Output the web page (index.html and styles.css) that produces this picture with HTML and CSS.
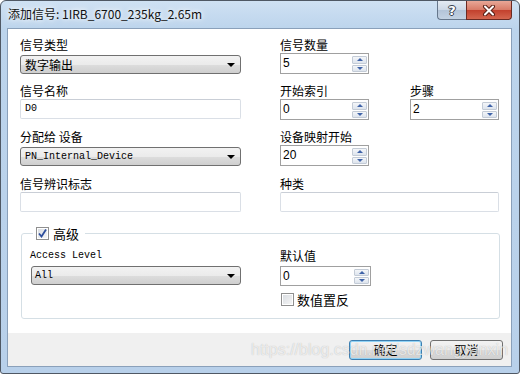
FILE: index.html
```html
<!DOCTYPE html>
<html lang="zh-CN">
  <head>
    <meta charset="UTF-8" />
    <title>添加信号</title>
    <link rel="stylesheet" href="styles.css">
  </head>
  <body>
    <div class="window">
      <div class="titlebar">
        <span class="title">添加信号: 1IRB_6700_235kg_2.65m</span>
        <div class="caption-buttons">
          <span class="cap-btn help">?</span>
          <span class="cap-btn close">
            <svg width="14" height="11" viewBox="0 0 14 11">
              <path d="M3 1.5 L11 9.5 M11 1.5 L3 9.5" stroke="#5a2016" stroke-width="4" stroke-linecap="round" />
              <path d="M3 1.5 L11 9.5 M11 1.5 L3 9.5" stroke="#fff" stroke-width="2" stroke-linecap="round" />
            </svg>
          </span>
        </div>
      </div>

      <div class="client">
        <div class="form">
          <div class="fields">
            <div class="field">
              <label>信号类型</label>
              <div class="combo"><span>数字输出</span><i class="arrow"></i></div>
            </div>
            <div class="field">
              <label>信号数量</label>
              <div class="spin">
                <span class="value">5</span>
                <span class="spin-btns"><b class="up"></b><b class="down"></b></span>
              </div>
            </div>

            <div class="field">
              <label>信号名称</label>
              <div class="textbox mono">D0</div>
            </div>
            <div class="field pair">
              <div class="field">
                <label>开始索引</label>
                <div class="spin">
                  <span class="value">0</span>
                  <span class="spin-btns"><b class="up"></b><b class="down"></b></span>
                </div>
              </div>
              <div class="field">
                <label>步骤</label>
                <div class="spin">
                  <span class="value">2</span>
                  <span class="spin-btns"><b class="up"></b><b class="down"></b></span>
                </div>
              </div>
            </div>

            <div class="field">
              <label>分配给 设备</label>
              <div class="combo mono"><span>PN_Internal_Device</span><i class="arrow"></i></div>
            </div>
            <div class="field">
              <label>设备映射开始</label>
              <div class="spin">
                <span class="value">20</span>
                <span class="spin-btns"><b class="up"></b><b class="down"></b></span>
              </div>
            </div>

            <div class="field">
              <label>信号辨识标志</label>
              <div class="textbox"></div>
            </div>
            <div class="field">
              <label>种类</label>
              <div class="textbox"></div>
            </div>
          </div>

          <fieldset class="group">
            <legend>
              <span class="check checked">
                <svg width="9" height="9" viewBox="0 0 9 9">
                  <path d="M1 4.5 L3.5 7.5 L8 0.5" fill="none" stroke="#2d4e9c" stroke-width="1.8" />
                </svg>
              </span>
              <span>高级</span>
            </legend>
            <div class="field">
              <label class="mono">Access Level</label>
              <div class="combo mono indent"><span>All</span><i class="arrow"></i></div>
            </div>
            <div class="field">
              <label>默认值</label>
              <div class="spin wide">
                <span class="value">0</span>
                <span class="spin-btns"><b class="up"></b><b class="down"></b></span>
              </div>
              <div class="check-row">
                <span class="check"></span>
                <span>数值置反</span>
              </div>
            </div>
          </fieldset>
        </div>

        <div class="footer">
          <button class="btn default">确定</button>
          <button class="btn">取消</button>
        </div>
      </div>

      <span class="watermark">https://blog.csdn.net/sdzwangyanxin</span>
    </div>
  </body>
</html>
```

FILE: styles.css
```css
* {
  box-sizing: border-box;
}
body {
  margin: 0;
  font-family: "Noto Sans CJK SC", "Liberation Sans", sans-serif;
  font-size: 12px;
  color: #000;
}
.mono {
  font-family: "Liberation Mono", "Noto Sans CJK SC", monospace;
  font-size: 10px;
}

/* window frame */
.window {
  position: relative;
  width: 520px;
  height: 374px;
  border: 1px solid #4f5864;
  border-radius: 6px 6px 3px 3px;
  background: linear-gradient(#cfe1f3, #bcd4ec 28px, #b8d0ea);
  padding: 0 7px 6px 6px;
  display: flex;
  flex-direction: column;
  overflow: hidden;
}
.titlebar {
  height: 27px;
  display: flex;
  justify-content: space-between;
  align-items: flex-start;
}
.title {
  padding: 5px 0 0 1px;
  line-height: 16px;
  font-size: 12px;
  color: #111;
  text-shadow: 0 0 8px #fff, 0 0 4px #fff;
}
.caption-buttons {
  display: flex;
}
.cap-btn {
  height: 19px;
  display: flex;
  align-items: center;
  justify-content: center;
}
.help {
  width: 29px;
  border: 1px solid #66778c;
  border-top: none;
  border-right: none;
  border-radius: 0 0 0 4px;
  background: linear-gradient(#e4ebf3, #ccd8e6 50%, #b3c4d8 51%, #c3d2e3);
  font-family: "DejaVu Sans", sans-serif;
  font-weight: bold;
  font-size: 13px;
  color: #fff;
  text-shadow: 0 0 1px #3b4452, 1px 0 0 #3b4452, -1px 0 0 #3b4452, 0 1px 0 #3b4452, 0 -1px 0 #3b4452;
}
.close {
  width: 46px;
  border: 1px solid #6b2a22;
  border-top: none;
  border-radius: 0 0 4px 0;
  background: linear-gradient(#e8a797, #d77a66 50%, #c2402d 51%, #d4664f);
}

/* client area */
.client {
  flex: 1;
  border: 1px solid #8aa0ba;
  background: #fff;
  display: flex;
  flex-direction: column;
}
.form {
  flex: 1;
  padding: 8px 12px 0 12px;
}
.fields {
  display: grid;
  grid-template-columns: 221px 219px;
  grid-template-rows: 46px 46px 47px auto;
  column-gap: 39px;
}
.field {
  display: flex;
  flex-direction: column;
}
.field label {
  display: block;
  height: 16px;
  line-height: 16px;
}
.pair {
  flex-direction: row;
  justify-content: space-between;
}

/* controls */
.combo {
  margin-top: 2px;
  height: 19px;
  border: 1px solid #707070;
  border-radius: 3px;
  background: linear-gradient(#f2f2f2, #ebebeb 50%, #dddddd 51%, #cfcfcf);
  display: flex;
  align-items: center;
  justify-content: space-between;
  padding: 0 5px 0 4px;
  line-height: 16px;
}
.combo.indent {
  margin-left: 1px;
  padding-left: 3px;
}
.arrow {
  width: 0;
  height: 0;
  border-left: 4px solid transparent;
  border-right: 4px solid transparent;
  border-top: 4px solid #000;
}
.textbox {
  height: 20px;
  border: 1px solid #dadfe6;
  border-top-color: #c9ced6;
  border-radius: 2px;
  padding: 0 4px;
  line-height: 18px;
}
.spin {
  width: 89px;
  height: 21px;
  border: 1px solid #a0a0a0;
  display: flex;
  justify-content: space-between;
  padding: 1px;
  font-family: "Liberation Sans", sans-serif;
  font-size: 12px;
}
.spin.wide {
  width: 91px;
  height: 20px;
  margin-top: 2px;
}
.spin .value {
  padding-left: 1px;
  line-height: 17px;
}
.spin-btns {
  width: 15px;
  display: flex;
  flex-direction: column;
  gap: 1px;
  padding-top: 1px;
}
.spin-btns b {
  flex: 1;
  border: 1px solid #c3cbd6;
  border-radius: 1px;
  background: linear-gradient(#f4f6f9, #dde4ed);
  display: flex;
  align-items: center;
  justify-content: center;
}
.spin-btns b::after {
  content: "";
  border-left: 3px solid transparent;
  border-right: 3px solid transparent;
}
.spin-btns .up::after {
  border-bottom: 3px solid #3f63a8;
}
.spin-btns .down::after {
  border-top: 3px solid #3f63a8;
}

/* group box */
.group {
  margin: 14px 0 0 1px;
  width: 479px;
  min-width: 0;
  border: 1px solid #d5dfe5;
  border-radius: 3px;
  padding: 8px 8px 12px 8px;
  display: grid;
  grid-template-columns: 211px 91px;
  column-gap: 39px;
}
.group legend {
  margin-left: 3px;
  padding: 0 6px 0 3px;
  height: 14px;
  display: flex;
  align-items: center;
  gap: 4px;
  font-size: 13px;
}
.check {
  width: 13px;
  height: 13px;
  border: 1px solid #8f8f8f;
  background: linear-gradient(135deg, #d7dbe0, #f7f7f7);
  box-shadow: inset 0 0 0 1px #fff;
  display: flex;
  align-items: center;
  justify-content: center;
}
.check-row {
  margin-top: 7px;
  margin-left: 1px;
  display: flex;
  align-items: center;
  gap: 3px;
  height: 13px;
  font-size: 13px;
}

/* footer */
.footer {
  height: 33px;
  background: #f0f0f0;
  display: flex;
  justify-content: flex-end;
  align-items: flex-start;
  gap: 8px;
  padding: 7px 8px 0 0;
}
.btn {
  width: 73px;
  height: 20px;
  border: 1px solid #707070;
  border-radius: 3px;
  background: linear-gradient(#f2f2f2, #ebebeb 50%, #dddddd 51%, #cfcfcf);
  font-family: "Noto Sans CJK SC", sans-serif;
  font-size: 12px;
  padding: 0;
  line-height: 16px;
}
.btn.default {
  border-color: #3c7fb1;
  box-shadow: inset 0 0 0 1px #90d2f5;
}

.watermark {
  position: absolute;
  left: 250px;
  top: 340px;
  font-family: "Liberation Sans", sans-serif;
  font-size: 16px;
  color: rgba(255, 255, 255, 0.7);
  text-shadow: 0 0 1px rgba(0, 0, 0, 0.25);
  pointer-events: none;
}
```
